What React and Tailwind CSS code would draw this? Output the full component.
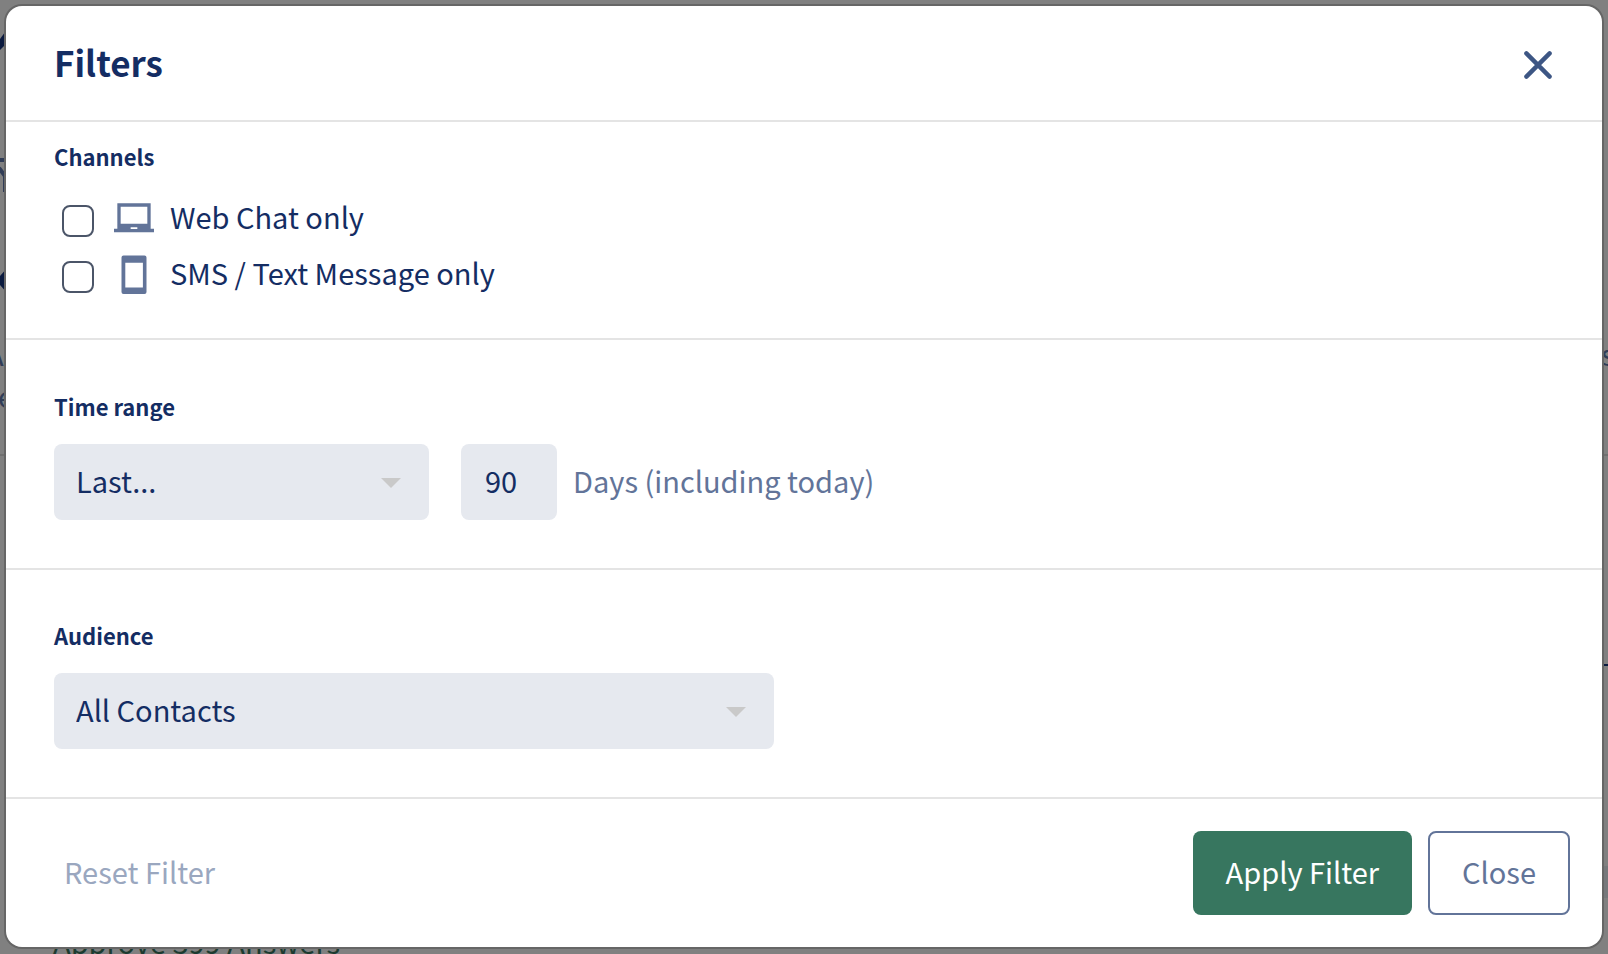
import React, { useState } from "react";

const LaptopIcon = () => (
  <svg viewBox="0 0 24 24" className="size-10 shrink-0 fill-[#627499]">
    <path d="M22 18.4V3.2H2v15.2H0v2.1h24v-2.1h-2zm-8 .2h-4v-1h4v1zm6-3.1H4V5.2h16v10.3z" />
  </svg>
);

const PhoneIcon = () => (
  <svg viewBox="0 0 40 40" className="size-10 shrink-0 fill-[#627499]">
    <path
      fillRule="evenodd"
      d="M9.5 1.4h21a2 2 0 0 1 2 2v34.6a2 2 0 0 1-2 2h-21a2 2 0 0 1-2-2V3.4a2 2 0 0 1 2-2zM11.3 8.7v24.8h17.6V8.7z"
    />
  </svg>
);

const CloseIcon = () => (
  <svg viewBox="0 0 28 28" className="size-7">
    <path
      d="M2.4 2.4l23.2 23.2M25.6 2.4L2.4 25.6"
      fill="none"
      stroke="#3d5684"
      strokeWidth="4.4"
      strokeLinecap="round"
    />
  </svg>
);

const Section = ({ title, className, children }) => (
  <section className={`border-b-2 border-[#e4e4e4] px-12 ${className}`}>
    <h3 className="mb-5 text-[22px] leading-9 font-bold">{title}</h3>
    {children}
  </section>
);

const ChannelOption = ({ id, icon, label, checked, onChange }) => (
  <div className="flex items-end pl-2">
    <input
      id={id}
      type="checkbox"
      checked={checked}
      onChange={onChange}
      className="mr-5 mb-px size-8 shrink-0 appearance-none rounded-lg border-2 border-[#4b5568] bg-white checked:bg-[#37765f]"
    />
    {icon}
    <label htmlFor={id} className="ml-4 text-[29px] leading-[44px]">
      {label}
    </label>
  </div>
);

const Select = ({ label, options, width }) => (
  <div className={`relative ${width}`}>
    <select
      aria-label={label}
      className="h-[76px] w-full appearance-none rounded-lg bg-[#e6e9ef] px-[22px] pb-[3px] text-[29px]"
    >
      {options.map((option) => (
        <option key={option}>{option}</option>
      ))}
    </select>
    <svg
      viewBox="0 0 20 10"
      className="pointer-events-none absolute top-[34px] right-7 h-[10px] w-5 fill-[#c9c9c9]"
    >
      <path d="M0 0h20L10 10z" />
    </svg>
  </div>
);

// Dimmed page that shows around the edges of the dialog
const PageBehind = () => (
  <div
    aria-hidden="true"
    className="absolute inset-0 flex flex-col overflow-hidden bg-[#808080] text-[29px] text-[#303c56]"
  >
    <div className="flex h-[456px] shrink-0 items-start justify-between border-b-2 border-[#707070]">
      <svg viewBox="0 0 8 456" className="h-[456px] w-2 shrink-0">
        <path d="M0 39L8 28v14L0 50z" fill="#0a1a3f" />
        <path
          d="M0 160h8M-1 168l6 8v16"
          fill="none"
          stroke="#303c56"
          strokeWidth="4"
        />
        <path d="M8 267L0 276v9l8 9v-11l-3-3 3-3z" fill="#0a1a3f" />
      </svg>
      <p className="mr-auto -ml-[22px] pt-[332px] leading-[42px]">
        A
        <br />
        <span className="pl-3">e</span>
      </p>
      <p className="w-[7px] pt-[332px] leading-[42px]">s</p>
    </div>
    <div className="h-[210px] w-2 shrink-0 self-end border-b-2 border-[#0a1a3f]" />
    <div className="mt-[200px] h-8 w-2 shrink-0 self-end bg-[#76787b]" />
    <p className="-mt-1 shrink-0 pl-[53px] leading-[94px] text-[#1c3b30]">
      Approve 399 Answers
    </p>
  </div>
);

const App = () => {
  const [channels, setChannels] = useState({ web: false, sms: false });
  const [days, setDays] = useState("90");

  const toggle = (key) =>
    setChannels((prev) => ({ ...prev, [key]: !prev[key] }));

  const reset = () => {
    setChannels({ web: false, sms: false });
    setDays("90");
  };

  return (
    <div className="relative min-h-screen overflow-hidden p-[6px] font-['Noto_Sans_CJK_SC',sans-serif] text-[#142d63]">
      <PageBehind />
      <div
        role="dialog"
        aria-labelledby="filters-title"
        className="relative rounded-2xl bg-white ring-2 ring-[#666]"
      >
        <header className="flex items-end justify-between border-b-2 border-[#e4e4e4] pt-[31px] pr-[42px] pb-[33px] pl-12">
          <h2
            id="filters-title"
            className="text-[35px] leading-[50px] font-bold"
          >
            Filters
          </h2>
          <button
            type="button"
            aria-label="Close filters"
            className="flex size-11 items-center justify-center"
          >
            <CloseIcon />
          </button>
        </header>

        <Section title="Channels" className="pt-4 pb-11">
          <div className="flex flex-col gap-3">
            <ChannelOption
              id="channel-web"
              icon={<LaptopIcon />}
              label="Web Chat only"
              checked={channels.web}
              onChange={() => toggle("web")}
            />
            <ChannelOption
              id="channel-sms"
              icon={<PhoneIcon />}
              label="SMS / Text Message only"
              checked={channels.sms}
              onChange={() => toggle("sms")}
            />
          </div>
        </Section>

        <Section title="Time range" className="py-12">
          <div className="flex items-center">
            <Select
              label="Time range"
              options={["Last...", "Between...", "All time"]}
              width="w-[375px]"
            />
            <input
              id="days"
              type="text"
              value={days}
              onChange={(e) => setDays(e.target.value)}
              className="ml-8 h-[76px] w-24 rounded-lg bg-[#e6e9ef] px-6 pb-1 text-[29px]"
            />
            <label
              htmlFor="days"
              className="ml-4 pb-[3px] text-[29px] text-[#627499]"
            >
              Days (including today)
            </label>
          </div>
        </Section>

        <Section title="Audience" className="pt-[47px] pb-12">
          <Select
            label="Audience"
            options={["All Contacts", "Leads", "Customers"]}
            width="w-[720px]"
          />
        </Section>

        <footer className="flex items-center gap-4 p-8">
          <button
            type="button"
            onClick={reset}
            className="mr-auto h-[84px] pb-[3px] pl-[26px] text-[29px] text-[#9aa7bf]"
          >
            Reset Filter
          </button>
          <button
            type="button"
            className="h-[84px] rounded-lg bg-[#37765f] px-[33px] pb-[3px] text-[29px] text-white"
          >
            Apply Filter
          </button>
          <button
            type="button"
            className="h-[84px] rounded-lg border-2 border-[#627499] px-8 pb-[3px] text-[29px] text-[#627499]"
          >
            Close
          </button>
        </footer>
      </div>
    </div>
  );
};

export default App;
